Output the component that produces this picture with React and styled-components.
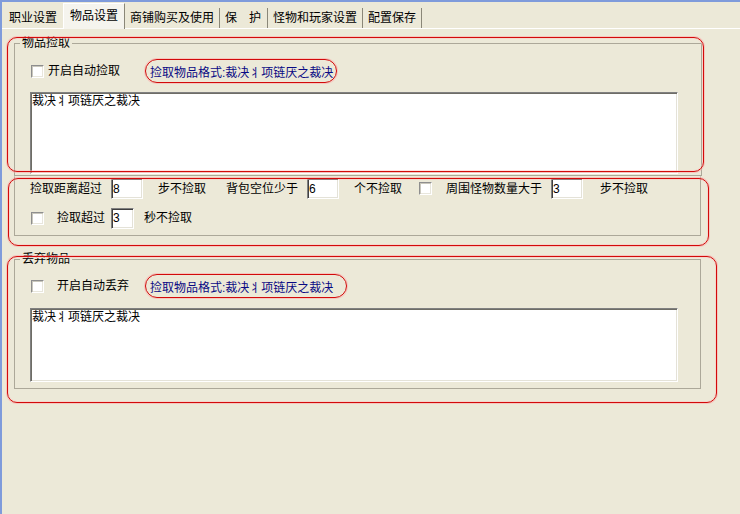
import React from 'react';
import styled, { createGlobalStyle } from 'styled-components';

const Global = createGlobalStyle`
  html, body { margin: 0; padding: 0; background: #ECE9D8; }
  body {
    width: 740px; height: 514px; overflow: hidden;
    font-family: "Liberation Sans", "Noto Sans CJK SC", sans-serif;
    font-size: 12px; color: #000;
  }
  * { box-sizing: border-box; }
`;

const Window = styled.div`
  width: 740px;
  height: 514px;
  border-top: 2px solid #7F9BDB;
  border-left: 2px solid #7F9BDB;
  background: #ECE9D8;
  display: flex;
  flex-direction: column;
`;

const TabStrip = styled.div`
  display: flex;
  align-items: flex-end;
  height: 27px;
  padding-left: 4px;
  border-bottom: 1px solid #fff;
`;

const Tab = styled.div`
  display: flex;
  align-items: center;
  white-space: nowrap;
  line-height: 14px;
  height: ${p => (p.$active ? '26px' : '20px')};
  padding: ${p => (p.$active ? '0 6px 2px 6px' : `0 ${p.$pr || 5}px 0 5px`)};
  border-right: 1px solid #8A8778;
  ${p => p.$active && `
    background: #F5F4EE;
    border-left: 1px solid #fff;
    border-top: 1px solid #fff;
    margin: 0 0 -1px 0;
    position: relative;
    z-index: 1;
  `}
  ${p => p.$first && `border-right: none; padding: 0 6px 0 3px;`}
`;

const Panel = styled.div`
  display: flex;
  flex-direction: column;
  padding-left: 12px;
`;

const Section = styled.div`
  position: relative;
  width: ${p => p.$w}px;
  margin-top: ${p => p.$mt || 0}px;
`;

const Group = styled.fieldset`
  margin: 0;
  min-width: 0;
  border: 1px solid #ACA899;
  ${p => p.$noTop && 'border-top-color: transparent;'}
  padding: ${p => p.$pad};
  display: flex;
  flex-direction: column;
`;

const Legend = styled.legend`
  padding: 0 2px;
  margin-left: -10px;
  line-height: 14px;
  font-size: 12px;
`;

const Row = styled.div`
  display: flex;
  align-items: center;
  height: ${p => p.$h}px;
  margin-top: ${p => p.$mt || 0}px;
`;

const Label = styled.span`
  white-space: nowrap;
  line-height: 14px;
  margin-left: ${p => p.$ml || 0}px;
`;

const Check = styled.span`
  display: inline-block;
  flex: none;
  width: 13px;
  height: 13px;
  margin-left: ${p => p.$ml || 0}px;
  background: #fff;
  border: 1px solid;
  border-color: #8E8E8E #fff #fff #8E8E8E;
  box-shadow: inset 1px 1px 0 #C9C7BC, inset -1px -1px 0 #E8E6DC;
`;

const Pill = styled.span`
  display: inline-flex;
  align-items: center;
  height: 24px;
  width: ${p => p.$w}px;
  margin-left: ${p => p.$ml || 0}px;
  padding-left: 4px;
  border: 1px solid #D20A0A;
  border-radius: 12px;
  box-shadow: 0 0 0 1px rgba(255, 170, 170, 0.55);
  color: #0A0A84;
  white-space: nowrap;
`;

const Field = styled.input`
  width: ${p => p.$w}px;
  height: 21px;
  margin-left: ${p => p.$ml || 0}px;
  padding: 0 0 0 1px;
  font: 12px "Liberation Sans", sans-serif;
  color: #000;
  background: #fff;
  border: 1px solid;
  border-color: #808080 #fff #fff #808080;
  box-shadow: inset 1px 1px 0 #404040, inset -1px -1px 0 #E4E2D8;
  outline: none;
`;

const Memo = styled.textarea`
  display: block;
  width: 648px;
  height: ${p => p.$h}px;
  margin-top: ${p => p.$mt}px;
  padding: 1px 1px;
  resize: none;
  overflow: hidden;
  font: 12px "Liberation Sans", "Noto Sans CJK SC", sans-serif;
  line-height: 14px;
  color: #000;
  background: #fff;
  border: 1px solid;
  border-color: #808080 #fff #fff #808080;
  box-shadow: inset 1px 1px 0 #6E6D66, inset -1px -1px 0 #E4E2D8;
  outline: none;
`;

const RedMark = styled.div`
  position: absolute;
  top: ${p => p.$t}px;
  left: ${p => p.$l}px;
  right: ${p => p.$r}px;
  bottom: ${p => p.$b}px;
  border: 1px solid #D20A0A;
  border-radius: 10px;
  box-shadow: 0 0 0 1px rgba(255, 170, 170, 0.55), inset 0 0 0 1px rgba(255, 190, 190, 0.45);
  pointer-events: none;
  z-index: 2;
`;

const FORMAT = '捡取物品格式:裁决丬项链厌之裁决';
const ITEM = '裁决丬项链厌之裁决';

export default function App() {
  return (
    <>
      <Global />
      <Window>
        <TabStrip>
          <Tab $first>职业设置</Tab>
          <Tab $active>物品设置</Tab>
          <Tab>商铺购买及使用</Tab>
          <Tab $pr={6}>保{'\u3000'}护</Tab>
          <Tab>怪物和玩家设置</Tab>
          <Tab>配置保存</Tab>
        </TabStrip>
        <Panel>
          <Section $w={688} $mt={7}>
            <Group $pad="0 0 1px 15px">
              <Legend>物品捡取</Legend>
              <Row $h={24} $mt={9}>
                <Check $ml={1} />
                <Label $ml={4}>开启自动捡取</Label>
                <Pill $w={192} $ml={25}>{FORMAT}</Pill>
              </Row>
              <Memo $h={82} $mt={9} readOnly value={ITEM} />
            </Group>
            <RedMark $t={1} $l={-7} $r={-2} $b={4} />
          </Section>

          <Section $w={687}>
            <Group $noTop $pad="1px 0 6px 15px">
              <Row $h={21}>
                <Label>捡取距离超过</Label>
                <Field $w={32} $ml={9} readOnly value="8" />
                <Label $ml={15}>步不捡取</Label>
                <Label $ml={20}>背包空位少于</Label>
                <Field $w={32} $ml={9} readOnly value="6" />
                <Label $ml={15}>个不捡取</Label>
                <Check $ml={17} />
                <Label $ml={14}>周围怪物数量大于</Label>
                <Field $w={32} $ml={9} readOnly value="3" />
                <Label $ml={17}>步不捡取</Label>
              </Row>
              <Row $h={22} $mt={8}>
                <Check $ml={1} />
                <Label $ml={13}>捡取超过</Label>
                <Field $w={23} $ml={6} readOnly value="3" />
                <Label $ml={10}>秒不捡取</Label>
              </Row>
            </Group>
            <RedMark $t={2} $l={-6} $r={-8} $b={-10} />
          </Section>

          <Section $w={687} $mt={16}>
            <Group $pad="0 0 6px 15px">
              <Legend>丢弃物品</Legend>
              <Row $h={24} $mt={8}>
                <Check $ml={1} />
                <Label $ml={13}>开启自动丢弃</Label>
                <Pill $w={202} $ml={16}>{FORMAT}</Pill>
              </Row>
              <Memo $h={74} $mt={10} readOnly value={ITEM} />
            </Group>
            <RedMark $t={4} $l={-7} $r={-16} $b={-14} />
          </Section>
        </Panel>
      </Window>
    </>
  );
}
